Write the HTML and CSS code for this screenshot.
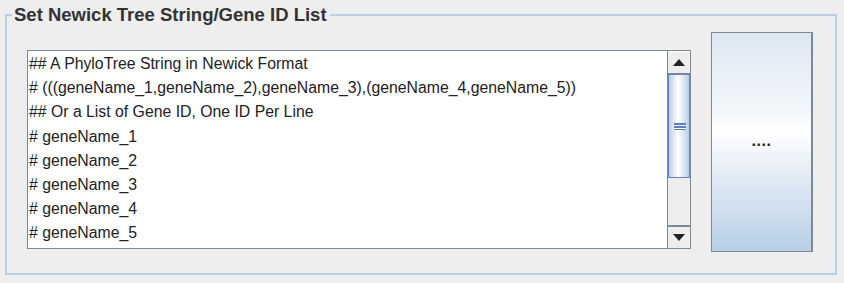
FILE: index.html
```html
<!DOCTYPE html>
<html>
<head>
<meta charset="utf-8">
<link rel="stylesheet" href="styles.css">
</head>
<body>
<fieldset class="panel">
  <legend class="panel-title">Set Newick Tree String/Gene ID List</legend>
  <div class="row">
    <div class="editor">
      <div class="lines">
        <div class="line">## A PhyloTree String in Newick Format</div>
        <div class="line"># (((geneName_1,geneName_2),geneName_3),(geneName_4,geneName_5))</div>
        <div class="line">## Or a List of Gene ID, One ID Per Line</div>
        <div class="line"># geneName_1</div>
        <div class="line"># geneName_2</div>
        <div class="line"># geneName_3</div>
        <div class="line"># geneName_4</div>
        <div class="line"># geneName_5</div>
      </div>
      <div class="scrollbar">
        <div class="sb-btn"><svg width="12" height="7" viewBox="0 0 12 7"><polygon points="6,0 12,7 0,7" fill="#222"/></svg></div>
        <div class="sb-track">
          <div class="sb-thumb"><span class="grip"></span></div>
        </div>
        <div class="sb-btn down"><svg width="12" height="7" viewBox="0 0 12 7"><polygon points="0,0 12,0 6,7" fill="#222"/></svg></div>
      </div>
    </div>
    <div class="browse">....</div>
  </div>
</fieldset>
</body>
</html>
```
FILE: styles.css
```css
html, body {
  margin: 0;
  padding: 0;
  background: #eeeeee;
  width: 844px;
  height: 283px;
  overflow: hidden;
}
.panel {
  margin: 5px 7px 0 5px;
  padding: 0 20px 0 20px;
  border: 2px solid #b8cfe5;
  height: 270px;
  box-sizing: border-box;
  min-width: 0;
}
.panel-title {
  font-family: "Liberation Sans", Arial, sans-serif;
  font-weight: bold;
  font-size: 18.5px;
  line-height: 19px;
  color: #333333;
  padding: 0 3px 0 2px;
  margin-left: -15px;
}
.row {
  display: flex;
  align-items: flex-start;
  gap: 20px;
}
.editor {
  margin-top: 26px;
  width: 664px;
  height: 199px;
  box-sizing: border-box;
  border: 1px solid #7a8a99;
  background: #ffffff;
  display: flex;
}
.lines {
  flex: 1;
  padding: 1px 0 0 1px;
  font-family: "Liberation Sans", Arial, sans-serif;
  font-size: 15.8px;
  color: #222222;
}
.line {
  height: 24.2px;
  line-height: 24.2px;
  white-space: pre;
}
.scrollbar {
  width: 22px;
  display: flex;
  flex-direction: column;
  background: #eeeeee;
  border-left: 1px solid #7a8a99;
}
.sb-btn {
  height: 23px;
  box-sizing: border-box;
  border-bottom: 1px solid #7a8a99;
  border-top: 1px solid #ffffff;
  display: flex;
  align-items: center;
  justify-content: center;
  background: #eeeeee;
}
.sb-btn.down {
  border-top: 2px solid #7a8a99;
  border-bottom: none;
}
.sb-track {
  flex: 1;
  display: flex;
  flex-direction: column;
}
.sb-thumb {
  height: 104px;
  box-sizing: border-box;
  border: 1px solid #6382bf;
  background: linear-gradient(to right, #b8cfe5 0%, #dfe9f4 25%, #ffffff 45%, #e6eef7 65%, #b8cfe5 100%);
  display: flex;
  align-items: center;
  justify-content: center;
}
.grip {
  display: block;
  width: 12px;
  height: 7px;
  margin-left: 1px;
  background: repeating-linear-gradient(to bottom, #5a7fc8 0px, #5a7fc8 2px, #ffffff 2px, #ffffff 3px);
}
.browse {
  margin-top: 8px;
  width: 102px;
  height: 220px;
  box-sizing: border-box;
  border: 1px solid #7a8a99;
  border-right-width: 2px;
  background: linear-gradient(to bottom, #dde8f3 0%, #f2f6fa 35%, #ffffff 45%, #e3ecf5 65%, #b8cfe5 100%);
  display: flex;
  align-items: center;
  justify-content: center;
  font-family: "Liberation Sans", Arial, sans-serif;
  font-weight: bold;
  font-size: 16px;
  letter-spacing: 0.5px;
  color: #222222;
  padding-bottom: 2px;
}
```
